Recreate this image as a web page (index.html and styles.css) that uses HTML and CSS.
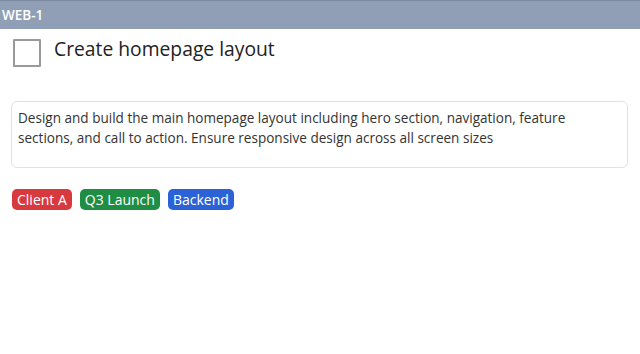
FILE: index.html
```html
<!DOCTYPE html>
<html lang="en">
<head>
    <meta charset="UTF-8">
    <meta name="viewport" content="width=device-width, initial-scale=1.0">
    <title>WEB-1</title>
    <link rel="stylesheet" href="styles.css">
</head>
<body>
    <div class="header">WEB-1</div>

    <div class="task">
        <div class="title-row">
            <span class="checkbox"></span>
            <h2 class="title">Create homepage layout</h2>
        </div>

        <div class="description">
            Design and build the main homepage layout including hero section, navigation, feature sections, and call to action. Ensure responsive design across all screen sizes
        </div>

        <div class="tags">
            <span class="tag tag-red">Client A</span>
            <span class="tag tag-green">Q3 Launch</span>
            <span class="tag tag-blue">Backend</span>
        </div>
    </div>
</body>
</html>
```

FILE: styles.css
```css
body {
    font-family: "Open Sans", sans-serif;
    background-color: #ffffff;
    margin: 0;
    color: #222;
}
.header {
    background: #909fb6;
    border-top: 1px solid #7d8ba0;
    color: white;
    font-size: 13.5px;
    font-weight: 600;
    height: 28px;
    line-height: 28px;
    padding-left: 2px;
}
.task {
    padding: 10px 12px 0 12px;
}
.title-row {
    display: flex;
    align-items: flex-start;
    gap: 13px;
    height: 28px;
}
.checkbox {
    width: 24px;
    height: 24px;
    border: 2px solid #9a9a9a;
    border-radius: 1px;
    margin-left: 1px;
}
.title {
    font-size: 19.3px;
    font-weight: 400;
    line-height: 20px;
    margin: 0;
    color: #222;
}
.description {
    margin-top: 34px;
    border: 1px solid #e2e2e2;
    border-radius: 6px;
    padding: 6px 6px 19px 6px;
    font-size: 13.55px;
    line-height: 20px;
    color: #333;
    margin-left: -1px;
}
.tags {
    display: flex;
    gap: 8px;
    margin-top: 21px;
}
.tag {
    color: white;
    font-size: 14px;
    line-height: 21px;
    padding: 0 5px;
    border-radius: 5px;
}
.tag-red {
    background: #d63a3f;
}
.tag-green {
    background: #1f8e44;
}
.tag-blue {
    background: #2b62d6;
}
```
